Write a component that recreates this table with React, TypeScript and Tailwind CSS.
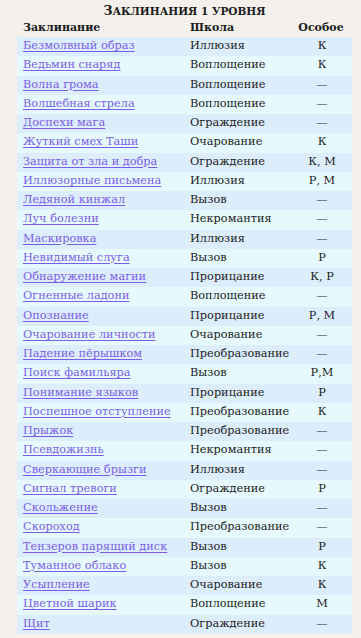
const spells: [string, string, string][] = [
  ["Безмолвный образ", "Иллюзия", "К"],
  ["Ведьмин снаряд", "Воплощение", "К"],
  ["Волна грома", "Воплощение", "—"],
  ["Волшебная стрела", "Воплощение", "—"],
  ["Доспехи мага", "Ограждение", "—"],
  ["Жуткий смех Таши", "Очарование", "К"],
  ["Защита от зла и добра", "Ограждение", "К, М"],
  ["Иллюзорные письмена", "Иллюзия", "Р, М"],
  ["Ледяной кинжал", "Вызов", "—"],
  ["Луч болезни", "Некромантия", "—"],
  ["Маскировка", "Иллюзия", "—"],
  ["Невидимый слуга", "Вызов", "Р"],
  ["Обнаружение магии", "Прорицание", "К, Р"],
  ["Огненные ладони", "Воплощение", "—"],
  ["Опознание", "Прорицание", "Р, М"],
  ["Очарование личности", "Очарование", "—"],
  ["Падение пёрышком", "Преобразование", "—"],
  ["Поиск фамильяра", "Вызов", "Р,М"],
  ["Понимание языков", "Прорицание", "Р"],
  ["Поспешное отступление", "Преобразование", "К"],
  ["Прыжок", "Преобразование", "—"],
  ["Псевдожизнь", "Некромантия", "—"],
  ["Сверкающие брызги", "Иллюзия", "—"],
  ["Сигнал тревоги", "Ограждение", "Р"],
  ["Скольжение", "Вызов", "—"],
  ["Скороход", "Преобразование", "—"],
  ["Тензеров парящий диск", "Вызов", "Р"],
  ["Туманное облако", "Вызов", "К"],
  ["Усыпление", "Очарование", "К"],
  ["Цветной шарик", "Воплощение", "М"],
  ["Щит", "Ограждение", "—"],
];

export default function App() {
  return (
    <div className="min-h-[638px] w-[361px] bg-[#f4f1ec] pt-[2px] pr-[9px] pl-[17px] font-['DejaVu_Serif',serif] text-[#1c1c1c]">
      <h2 className="h-[16px] text-center leading-[16px] font-bold">
        <span className="text-[12.5px]">З</span>
        <span className="text-[10.5px]">АКЛИНАНИЯ 1 УРОВНЯ</span>
      </h2>
      <div className="mt-[1px] flex h-[18px] items-center text-[11px] font-bold">
        <span className="w-[173px] pl-[6px]">Заклинание</span>
        <span className="w-[102px]">Школа</span>
        <span className="flex-1 pr-[2px] text-center">Особое</span>
      </div>
      <div className="flex flex-col text-[11.3px]">
        {spells.map(([name, school, special], i) => (
          <div
            key={name}
            className={`flex h-[19.26px] items-center ${i % 2 === 0 ? "bg-[#dcedfb]" : "bg-[#e6fafd]"}`}
          >
            <span className="w-[173px] pl-[6px]">
              <a href="#" className="text-[#7b5ee6] underline underline-offset-2">
                {name}
              </a>
            </span>
            <span className="w-[102px]">{school}</span>
            <span className="flex-1 text-center">{special}</span>
          </div>
        ))}
      </div>
    </div>
  );
}
